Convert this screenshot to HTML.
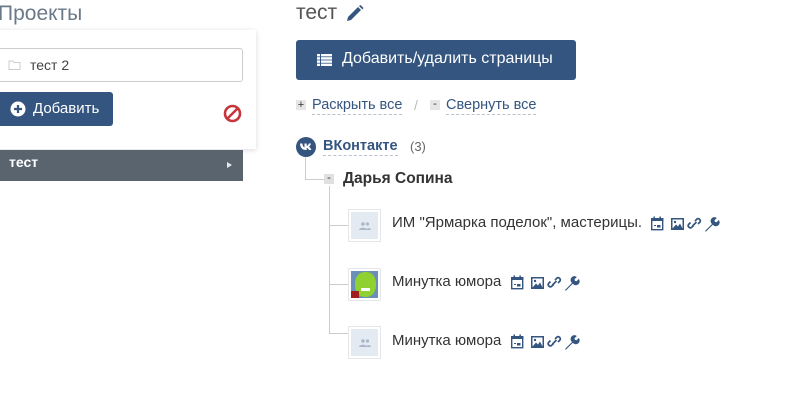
<!DOCTYPE html>
<html><head><meta charset="utf-8">
<style>
*{margin:0;padding:0;box-sizing:border-box}
body{width:798px;height:410px;background:#fff;font-family:"Liberation Sans","DejaVu Sans",sans-serif;position:relative;overflow:hidden;color:#333}
.a{position:absolute}
.icons{position:absolute;width:72px;height:16px}
.av{position:absolute;width:33px;height:33px;border:1px solid #e3e6ea;background:#fff;padding:2px}
.av div{width:100%;height:100%;background:#e4eaf2;position:relative}
.tx{position:absolute;font-size:15px;color:#333;white-space:nowrap}
.dash{border-bottom:1px dashed #b8c2cc}
</style></head><body>

<div class="a" style="left:-2px;top:2px;font-size:21px;color:#6a7a89">Проекты</div>

<div class="a" style="left:-20px;top:30px;width:276px;height:119px;background:#fff;box-shadow:0 1px 5px rgba(0,0,0,.15)"></div>
<div class="a" style="left:-10px;top:48px;width:253px;height:34px;border:1px solid #ccc;border-radius:3px;background:#fff"></div>
<svg class="a" style="left:8px;top:59px" width="14" height="12" viewBox="0 0 14 12"><path d="M1 2h4l1 1.5h6v7H1z" fill="none" stroke="#ccc" stroke-width="1"/></svg>
<div class="a" style="left:30px;top:57px;font-size:14px;color:#444">тест 2</div>

<div class="a" style="left:-20px;top:92px;width:133px;height:34px;background:#34557f;border-radius:3px"></div>
<svg class="a" style="left:10px;top:101px" width="16" height="16" viewBox="0 0 16 16"><circle cx="8" cy="8" r="7.5" fill="#fff"/><path d="M8 4v8M4 8h8" stroke="#34557f" stroke-width="2.2"/></svg>
<div class="a" style="left:33px;top:100px;font-size:15px;color:#fff">Добавить</div>
<svg class="a" style="left:223px;top:104px" width="19" height="19" viewBox="0 0 19 19"><circle cx="9.5" cy="9.5" r="7.5" fill="none" stroke="#c9353c" stroke-width="2.6"/><path d="M4.5 14.5l10-10" stroke="#c9353c" stroke-width="2.6"/></svg>

<div class="a" style="left:0;top:150px;width:243px;height:31px;background:#59646f"></div>
<div class="a" style="left:9px;top:154px;font-size:14px;font-weight:bold;color:#fff">тест</div>
<div class="a" style="left:227px;top:162px;width:0;height:0;border-left:5px solid #e8e8e8;border-top:3.5px solid transparent;border-bottom:3.5px solid transparent"></div>

<div class="a" style="left:296px;top:1px;font-size:21px;color:#555">тест</div>
<svg class="a" style="left:345px;top:5px" width="19" height="18" viewBox="0 0 19 18"><path d="M2 16l1-4L13 2l3 3L6 15z" fill="#34557f"/><path d="M14 1l1.5-1 3 3-1 1.5z" fill="#34557f"/></svg>

<div class="a" style="left:296px;top:40px;width:280px;height:40px;background:#34557f;border-radius:3px"></div>
<svg class="a" style="left:317px;top:54px" width="15" height="12" viewBox="0 0 15 12"><g fill="#fff"><rect x="0" y="0" width="3" height="2.4"/><rect x="4" y="0" width="11" height="2.4"/><rect x="0" y="3.2" width="3" height="2.4"/><rect x="4" y="3.2" width="11" height="2.4"/><rect x="0" y="6.4" width="3" height="2.4"/><rect x="4" y="6.4" width="11" height="2.4"/><rect x="0" y="9.6" width="3" height="2.4"/><rect x="4" y="9.6" width="11" height="2.4"/></g></svg>
<div class="a" style="left:342px;top:50px;font-size:16px;color:#fff">Добавить/удалить страницы</div>

<div class="a" style="left:296px;top:100px;width:10px;height:10px;background:#e6e6e6;font-size:11px;line-height:10px;text-align:center;color:#333">+</div>
<div class="a dash" style="left:312px;top:97px;font-size:14.5px;color:#34557f;line-height:17px">Раскрыть все</div>
<div class="a" style="left:414px;top:97px;font-size:14px;color:#bbb">/</div>
<div class="a" style="left:430px;top:100px;width:10px;height:10px;background:#e6e6e6;font-size:11px;line-height:9px;text-align:center;color:#333">-</div>
<div class="a dash" style="left:446px;top:97px;font-size:14.5px;color:#34557f;line-height:17px">Свернуть все</div>

<svg class="a" style="left:296px;top:137px" width="20" height="20" viewBox="0 0 20 20"><circle cx="10" cy="10" r="10" fill="#34557f"/><path d="M4 6.5h2.3c.3 2.2 1.3 3.8 2.2 4.1V6.5h2.2v2.4c.9-.1 1.9-1.3 2.2-2.4h2.1c-.3 1.5-1.4 2.7-2.2 3.2.8.3 2 1.4 2.5 3.3h-2.3c-.4-1.1-1.3-2-2.3-2.1V13h-.5C6.4 13 4.3 10.8 4 6.5z" fill="#fff"/></svg>
<div class="a dash" style="left:323px;top:138px;font-size:14.5px;font-weight:bold;color:#34557f;line-height:17px">ВКонтакте</div>
<div class="a" style="left:410px;top:139px;font-size:13px;color:#666">(3)</div>

<div class="a" style="left:305px;top:157px;width:1px;height:23px;background:#ccc"></div>
<div class="a" style="left:305px;top:179px;width:19px;height:1px;background:#ccc"></div>
<div class="a" style="left:324px;top:174px;width:10px;height:10px;background:#e0e0e0;font-size:11px;line-height:8px;text-align:center;color:#333">-</div>
<div class="a" style="left:343px;top:170px;font-size:15.5px;font-weight:bold;color:#333">Дарья Сопина</div>

<div class="a" style="left:329px;top:186px;width:1px;height:148px;background:#ccc"></div>
<div class="a" style="left:329px;top:225px;width:19px;height:1px;background:#ccc"></div>
<div class="a" style="left:329px;top:284px;width:19px;height:1px;background:#ccc"></div>
<div class="a" style="left:329px;top:333px;width:19px;height:1px;background:#ccc"></div>

<div class="av" style="left:348px;top:209px"><div><svg class="a" style="left:8px;top:10px" width="12" height="8" viewBox="0 0 12 8"><g fill="#a9b7c9"><circle cx="4" cy="2" r="1.8"/><circle cx="8.5" cy="2" r="1.6"/><path d="M0 8c0-3 8-3 8 0z"/><path d="M7 8c.5-2.5 5-2.5 5 0z"/></g></svg></div></div>
<div class="tx" style="left:392px;top:214px">ИМ "Ярмарка поделок", мастерицы.</div>

<div class="av" style="left:348px;top:268px"><div style="background:#6a8fb8;overflow:hidden"><div style="position:absolute;left:4px;top:1px;width:21px;height:25px;background:#8fd130;border-radius:45%"></div><div style="position:absolute;left:0;top:20px;width:8px;height:10px;background:#a02020"></div><div style="position:absolute;left:10px;top:17px;width:9px;height:3px;background:#fff"></div></div></div>
<div class="tx" style="left:392px;top:273px">Минутка юмора</div>

<div class="av" style="left:348px;top:326px"><div><svg class="a" style="left:8px;top:10px" width="12" height="8" viewBox="0 0 12 8"><g fill="#a9b7c9"><circle cx="4" cy="2" r="1.8"/><circle cx="8.5" cy="2" r="1.6"/><path d="M0 8c0-3 8-3 8 0z"/><path d="M7 8c.5-2.5 5-2.5 5 0z"/></g></svg></div></div>
<div class="tx" style="left:392px;top:332px">Минутка юмора</div>

<svg width="0" height="0" style="position:absolute"><defs>
<g id="ic">
<rect x="1.7" y="2.7" width="11" height="11" fill="none" stroke="#34557f" stroke-width="1.4"/><rect x="1" y="2" width="12.4" height="3" fill="#34557f"/><rect x="3.5" y="0.5" width="1.5" height="2.5" fill="#34557f"/><rect x="9.4" y="0.5" width="1.5" height="2.5" fill="#34557f"/><rect x="7" y="9" width="3.5" height="2.5" fill="#34557f"/><rect x="4" y="9" width="2" height="1" fill="#34557f"/>
<rect x="21" y="2" width="13" height="12" fill="#34557f"/><rect x="22.5" y="3.5" width="10" height="9" fill="#fff"/><path d="M22.5 12.5l3.5-4 2 2 2-3 2.5 5z" fill="#34557f"/><circle cx="25" cy="6" r="1.2" fill="#34557f"/>
<path d="M43.5 9.5l-2 2a2.2 2.2 0 0 1-3-3l2-2M45 5l2-2a2.2 2.2 0 0 1 3 3l-2 2M42.5 10l4-4" fill="none" stroke="#34557f" stroke-width="1.7"/>
<path d="M55 15l7-7a3.8 3.8 0 0 1 4.8-6l-2.3 2.3.4 1.6 1.6.4 2.3-2.3a3.8 3.8 0 0 1-6 4.8l-7 7z" fill="#34557f"/>
</g></defs></svg>
<svg class="icons" style="left:650px;top:216px" viewBox="0 0 72 16"><use href="#ic"/></svg>
<svg class="icons" style="left:510px;top:275px" viewBox="0 0 72 16"><use href="#ic"/></svg>
<svg class="icons" style="left:510px;top:334px" viewBox="0 0 72 16"><use href="#ic"/></svg>

</body></html>
